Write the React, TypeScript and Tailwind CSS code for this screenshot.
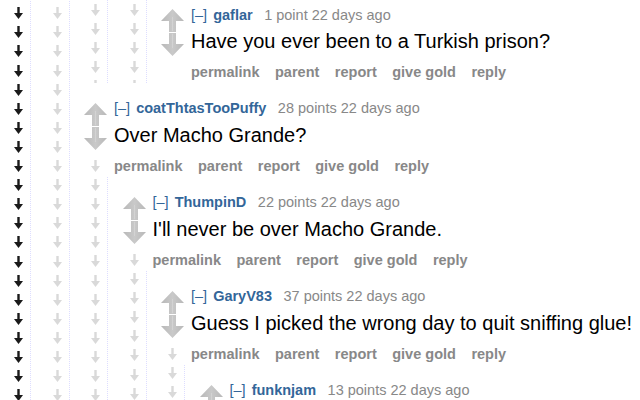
import type { ReactNode } from "react";

type CommentData = {
  author: string;
  points: string;
  body: string;
};

const comments: Record<string, CommentData> = {
  gaflar: { author: "gaflar", points: "1 point 22 days ago", body: "Have you ever been to a Turkish prison?" },
  coat: { author: "coatThtasTooPuffy", points: "28 points 22 days ago", body: "Over Macho Grande?" },
  thumpin: { author: "ThumpinD", points: "22 points 22 days ago", body: "I'll never be over Macho Grande." },
  gary: { author: "GaryV83", points: "37 points 22 days ago", body: "Guess I picked the wrong day to quit sniffing glue!" },
  funk: { author: "funknjam", points: "13 points 22 days ago", body: "" },
};

const buttons = ["permalink", "parent", "report", "give gold", "reply"];

function UpArrow() {
  return (
    <svg width="23" height="23" viewBox="0 0 23 23" className="mt-[4.5px] shrink-0">
      <defs>
        <linearGradient id="voteShade" x1="0" y1="0" x2="1" y2="0">
          <stop offset="0" stopColor="#b8b8b8" />
          <stop offset="0.5" stopColor="#c9c9c9" />
          <stop offset="1" stopColor="#b8b8b8" />
        </linearGradient>
      </defs>
      <path d="M11.5 0 L23 12 L15 12 L15 23 L8 23 L8 12 L0 12 Z" fill="url(#voteShade)" />
      <path d="M11.5 8 V22" stroke="#d3d3d3" strokeWidth="1" />
    </svg>
  );
}

function DownArrow() {
  return (
    <svg width="23" height="23" viewBox="0 0 23 23" className="mt-[1px] shrink-0">
      <path d="M8 0 L15 0 L15 11 L23 11 L11.5 23 L0 11 L8 11 Z" fill="url(#voteShade)" />
      <path d="M11.5 1 V15" stroke="#d3d3d3" strokeWidth="1" />
    </svg>
  );
}

function SmallArrow({ dark }: { dark?: boolean }) {
  const color = dark ? "#1a1a1a" : "#d9d9d9";
  return (
    <svg width="9" height="12" viewBox="0 0 9 12">
      <rect x="3.3" y="0" width="2.4" height="7" fill={color} />
      <path d="M0 6 L9 6 L4.5 12 Z" fill={color} />
    </svg>
  );
}

// column of little arrows that fills whatever height the row gives it
function ArrowTrail({ dark, offset }: { dark?: boolean; offset: string }) {
  return (
    <div className="w-full flex-1 overflow-hidden [contain:size]">
      <div className={offset}>
        {Array.from({ length: 30 }).map((_, i) => (
          <div key={i} className="flex h-[19.1px] items-center justify-center">
            <SmallArrow dark={dark} />
          </div>
        ))}
      </div>
    </div>
  );
}

function Rail({ dark, offset, children, indent = true }: { dark?: boolean; offset: string; children: ReactNode; indent?: boolean }) {
  return (
    <div className={`flex ${indent ? "ml-[15px]" : ""}`}>
      <div className="flex w-[22.5px] shrink-0 flex-col">
        <ArrowTrail dark={dark} offset={offset} />
      </div>
      <div className="min-w-0 flex-1 border-l border-dotted border-[#ddf]">{children}</div>
    </div>
  );
}

function Comment({ c, children }: { c: CommentData; children?: ReactNode }) {
  return (
    <div className="ml-[15px] pt-[15.3px]">
      <div className="flex">
        <div className="flex w-[22.5px] shrink-0 flex-col items-center">
          <UpArrow />
          <DownArrow />
          {children && <ArrowTrail offset="pt-[6.45px]" />}
        </div>
        <div className="min-w-0 flex-1">
          <div className="pl-[7px]">
            <div className="whitespace-nowrap text-[14.5px] leading-[20px]">
              <span className="mr-[6px] text-[#369]">[–]</span>
              <span className="mr-[11.5px] font-bold text-[#369]">{c.author}</span>
              <span className="text-[#888]">{c.points}</span>
            </div>
            <p className="mt-[2.3px] whitespace-nowrap text-[20px] leading-[28px] text-black">{c.body}</p>
            <ul className="mt-[6.9px] flex gap-[15.5px] pb-[1.5px] text-[14.5px] font-bold leading-[20px] text-[#888]">
              {buttons.map((b) => (
                <li key={b} className="whitespace-nowrap">{b}</li>
              ))}
            </ul>
          </div>
          {children && <div className="border-l border-dotted border-[#ddf]">{children}</div>}
        </div>
      </div>
    </div>
  );
}

export default function App() {
  return (
    <div className="h-[400px] w-[640px] overflow-hidden bg-white font-['Liberation_Sans',Arial,sans-serif]">
      <div className="-mt-[10.8px] pl-[7.5px]">
        <Rail dark offset="-mt-[4.55px]" indent={false}>
          <Rail offset="-mt-[4.55px]">
            <Rail offset="-mt-[8.35px]">
              <Rail offset="-mt-[8.35px]">
                <Comment c={comments.gaflar} />
              </Rail>
            </Rail>
            <Comment c={comments.coat}>
              <Comment c={comments.thumpin}>
                <Comment c={comments.gary}>
                  <Comment c={comments.funk} />
                </Comment>
              </Comment>
            </Comment>
          </Rail>
        </Rail>
      </div>
    </div>
  );
}
